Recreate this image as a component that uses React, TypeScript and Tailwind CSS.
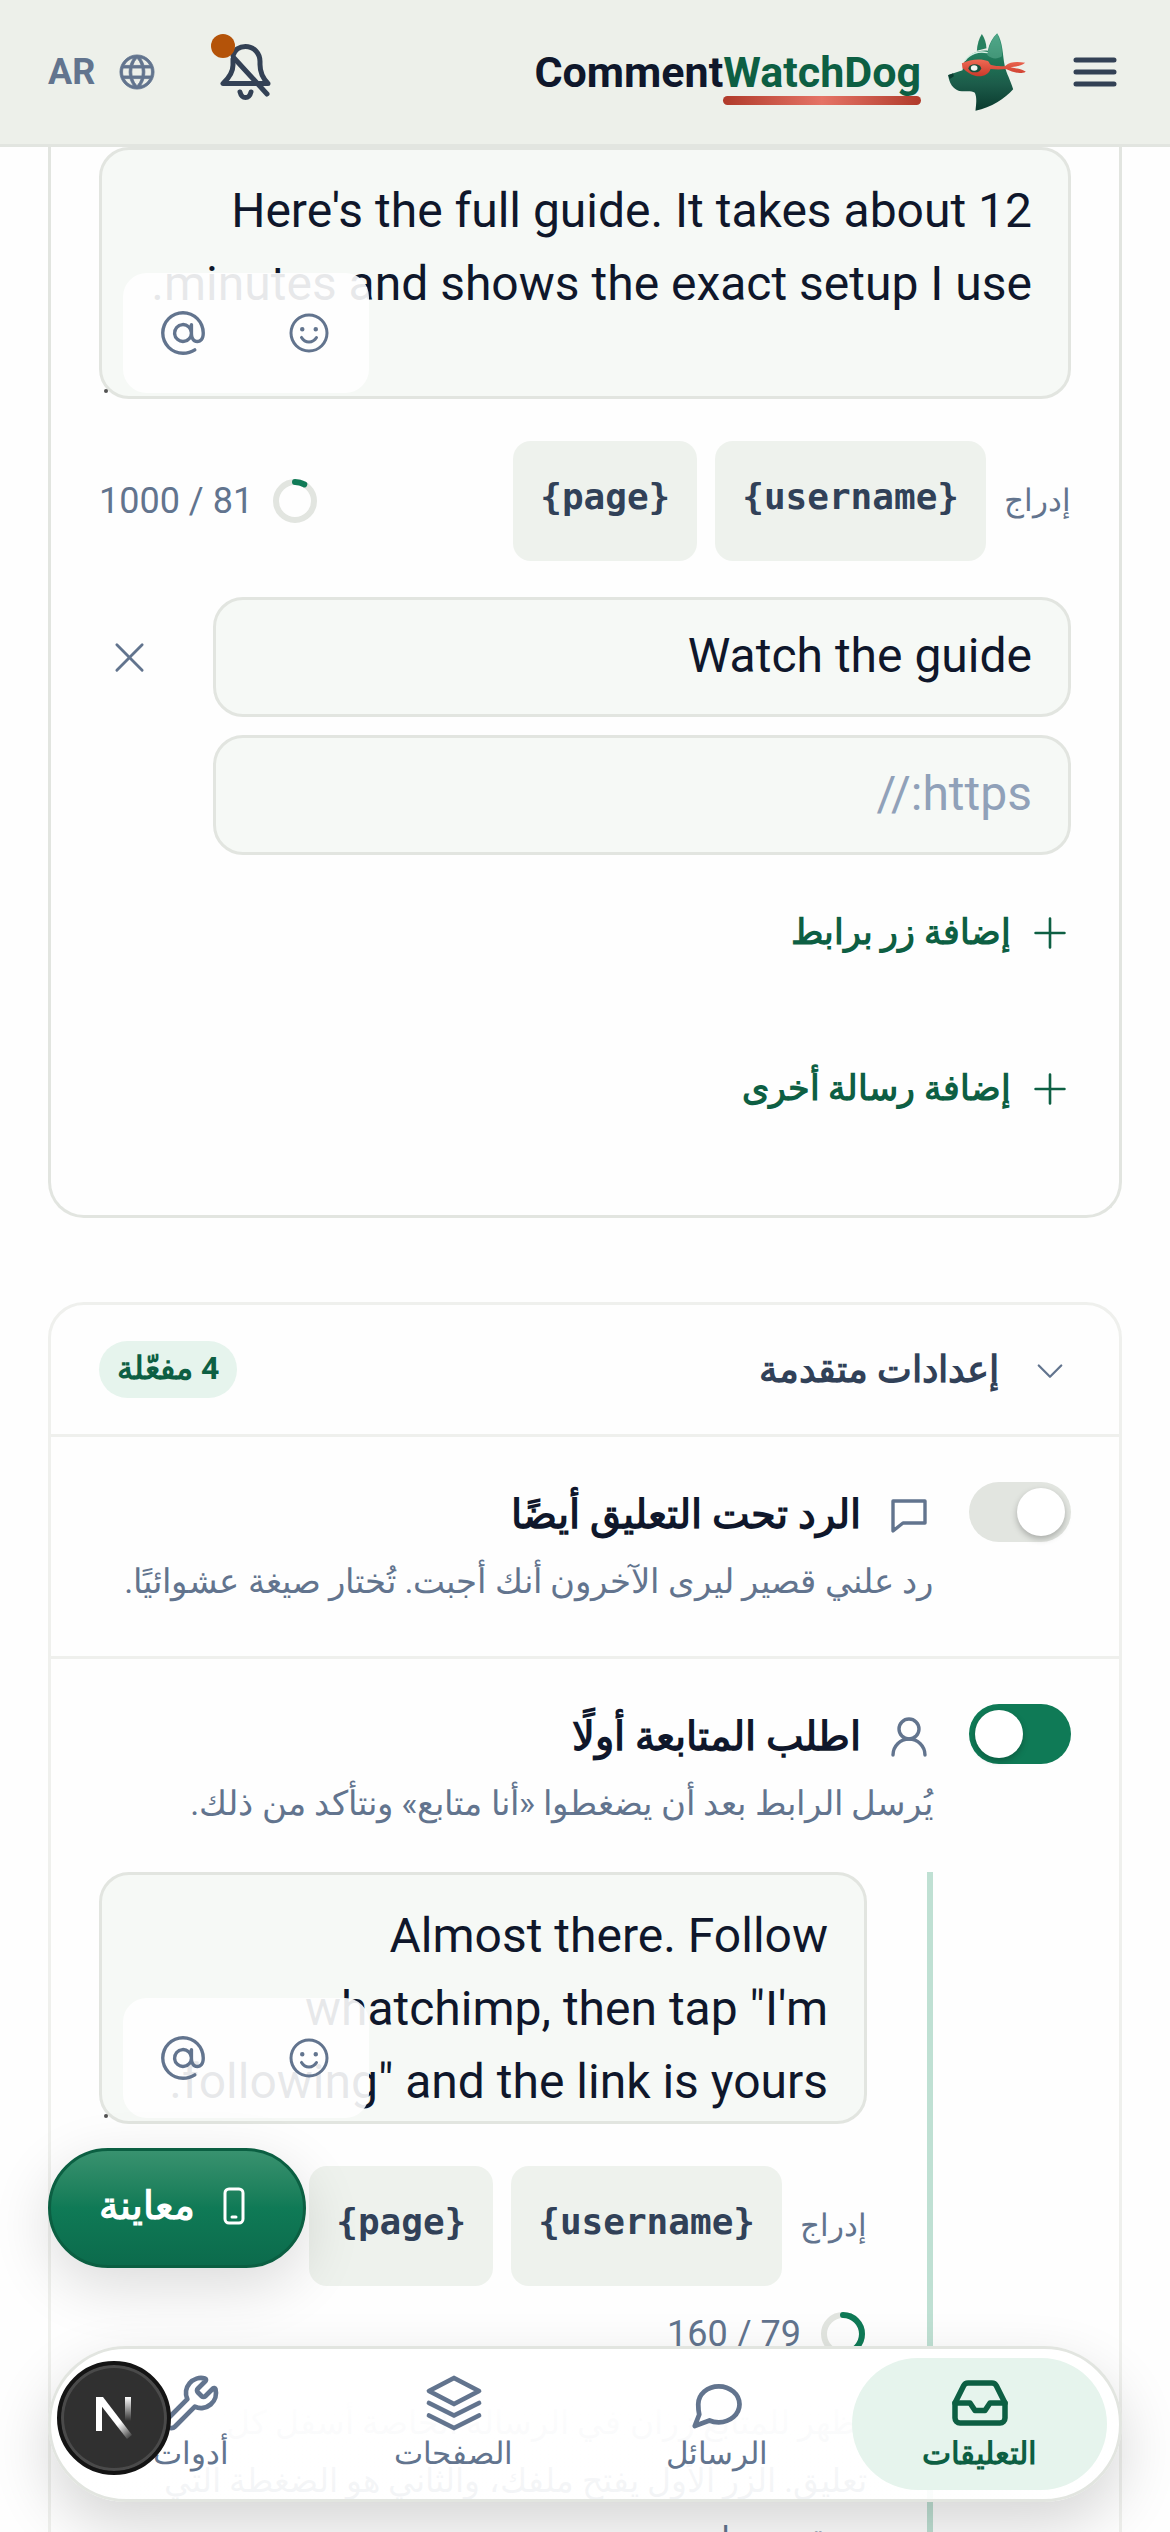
import { useState } from "react";
import type { ReactNode } from "react";
import { Inbox, UserRound, Wrench } from "lucide-react";
import { PiAt, PiCaretDown, PiGlobe, PiPlus, PiSmiley, PiX } from "react-icons/pi";

function DogLogo() {
  return (
    <svg viewBox="75 38 233 234" className="size-[78px] shrink-0" aria-hidden="true">
      <defs>
        <linearGradient id="fur" x1="0" y1="0" x2="0" y2="1">
          <stop offset="0" stopColor="#3a9a7a" />
          <stop offset="0.35" stopColor="#1f7657" />
          <stop offset="0.65" stopColor="#1c5c4a" />
          <stop offset="1" stopColor="#0a3a2e" />
        </linearGradient>
        <linearGradient id="mask" x1="0" y1="0" x2="0" y2="1">
          <stop offset="0" stopColor="#ef6a54" />
          <stop offset="1" stopColor="#c9392a" />
        </linearGradient>
      </defs>
      <path d="M176 41C168 54 162 72 161 91L190 84C189 68 184 52 176 41Z" fill="#27815f" />
      <path
        d="M222 39C208 52 198 70 194 91C165 88 136 100 122 128L118 150L75 164C78 190 90 206 108 212C126 215 144 210 155 217C162 232 159 252 157 271C205 262 245 235 270 207C262 180 250 160 245 138C238 105 240 66 222 39Z"
        fill="url(#fur)"
      />
      <path d="M222 41C234 70 238 90 236 108C222 118 205 116 192 104C196 80 206 56 222 41Z" fill="#6cbb9d" opacity="0.45" />
      <path d="M126 120C140 100 166 91 192 97" fill="none" stroke="#d5efe3" strokeWidth="4" strokeLinecap="round" />
      <path d="M75 165L90 159L92 168L80 176Z" fill="#0c3d31" />
      <path
        d="M116 129C140 116 176 114 194 122C200 126 198 132 204 134C220 138 234 138 246 137C262 122 284 124 306 127C292 138 274 138 262 141C280 144 296 146 308 154C288 164 268 154 248 146C234 148 218 148 202 146C198 162 178 171 158 167C138 163 130 152 118 144Z"
        fill="url(#mask)"
      />
      <ellipse cx="155" cy="144" rx="19" ry="12" fill="#14503d" />
      <ellipse cx="153" cy="143" rx="10" ry="8" fill="#f2f6f2" />
    </svg>
  );
}

function BellOff() {
  return (
    <svg viewBox="0 0 60 60" className="size-[60px]" fill="none" stroke="#334155" strokeWidth="5" strokeLinecap="round" strokeLinejoin="round" aria-hidden="true">
      <path d="M17 17v6c0 8-4 13-10 18.5h45c-5-5-8-10-8-19v-3c0-8-6-15-14.5-15-6 0-10.5 3-12.5 9" />
      <path d="M18 16l33 36" />
      <path d="M24 50c1 4 3 5.500 5.500 5.500s4.500-1.500 5.500-5.500" />
    </svg>
  );
}

function Ring({ value }: { value: number }) {
  const length = 2 * Math.PI * 19;
  return (
    <svg viewBox="0 0 48 48" className="size-12 shrink-0" fill="none" strokeWidth="6" aria-hidden="true">
      <circle cx="24" cy="24" r="19" stroke="#e2e5e0" />
      <circle cx="24" cy="24" r="19" stroke="#0f7a56" strokeDasharray={`${length * value} ${length}`} strokeLinecap="round" transform="rotate(-90 24 24)" />
    </svg>
  );
}

function Counter({ used, max }: { used: number; max: number }) {
  return (
    <div className="flex items-center gap-[18px] text-[36px] leading-[48px] text-slate-500">
      <Ring value={used / max} />
      <span>
        {used} / {max}
      </span>
    </div>
  );
}

function Tokens() {
  return (
    <div className="flex items-center gap-[18px]">
      <span className="text-[31px] leading-[48px] text-slate-500">إدراج</span>
      {["{username}", "{page}"].map((token) => (
        <button key={token} type="button" dir="ltr" className="h-[120px] rounded-[18px] bg-[#eef2ed] px-[27px] pb-2 font-['DejaVu_Sans_Mono',monospace] text-[36px] font-bold text-slate-700">
          {token}
        </button>
      ))}
    </div>
  );
}

function MessageBox({ label, initial }: { label: string; initial: string }) {
  const [text, setText] = useState(initial);
  return (
    <div className="relative">
      <textarea
        aria-label={label}
        value={text}
        onChange={(e) => setText(e.target.value)}
        className="block h-[252px] w-full resize-none overflow-hidden rounded-[30px] border-[3px] border-[#e2e5e0] bg-[#f6f9f6] px-9 py-[24px] text-[48px] leading-[73px] text-slate-900"
      />
      <span className="absolute bottom-[6px] left-[5px] size-1 rounded-full bg-neutral-600" />
      <div className="absolute bottom-[6px] left-6 flex gap-[6px] rounded-[24px] bg-white/90 text-slate-500">
        <button type="button" aria-label="إضافة رمز تعبيري" className="flex h-[120px] w-[120px] items-center justify-center">
          <PiSmiley className="size-12" />
        </button>
        <button type="button" aria-label="إشارة إلى شخص" className="flex h-[120px] w-[120px] items-center justify-center">
          <PiAt className="size-[54px]" />
        </button>
      </div>
    </div>
  );
}

function AddButton({ children }: { children: ReactNode }) {
  return (
    <button type="button" className="flex h-[120px] items-center gap-[18px] self-start text-[35px] font-bold text-[#0d5f43]">
      <PiPlus className="size-[42px]" />
      {children}
    </button>
  );
}

function SettingHead({ id, icon, title, text, initial }: { id: string; icon: ReactNode; title: string; text: string; initial: boolean }) {
  const [on, setOn] = useState(initial);
  return (
    <div className="flex items-start gap-9">
      <input
        id={id}
        type="checkbox"
        role="switch"
        checked={on}
        onChange={(e) => setOn(e.target.checked)}
        className="h-[60px] w-[102px] shrink-0 appearance-none rounded-full bg-[#e2e5e0] p-[6px] before:block before:size-12 before:rounded-full before:bg-white before:shadow-[0_3px_6px_rgba(0,0,0,0.25)] checked:bg-[#0f7a56] checked:before:-translate-x-[42px]"
      />
      <div className="min-w-0 flex-1">
        <label htmlFor={id} className="flex items-center gap-6 text-[40px] leading-[66px] font-bold text-slate-900">
          {icon}
          {title}
        </label>
        <p className="text-[34px] leading-[66px] text-slate-500">{text}</p>
      </div>
    </div>
  );
}

function ChatIcon() {
  return (
    <svg viewBox="0 0 24 24" className="size-12 text-slate-500" fill="none" stroke="currentColor" strokeWidth="1.700" strokeLinejoin="round" aria-hidden="true">
      <path d="M4 5h16v11H9l-5 4V5z" />
    </svg>
  );
}

function LayersIcon() {
  return (
    <svg viewBox="0 0 24 24" className="size-[60px]" fill="none" stroke="currentColor" strokeWidth="1.900" strokeLinecap="round" strokeLinejoin="round" aria-hidden="true">
      <path d="M12 2 2 7.200l10 5.200 10-5.200z" />
      <path d="m2 12 10 5 10-5" />
      <path d="m2 17 10 5 10-5" />
    </svg>
  );
}

function BubbleIcon() {
  return (
    <svg viewBox="0 0 24 24" className="size-[60px]" fill="none" stroke="currentColor" strokeWidth="1.900" strokeLinecap="round" strokeLinejoin="round" aria-hidden="true">
      <path d="M21 12.500c0 4-3.700 7.200-8.300 7.200-1.300 0-2.600-.2-3.700-.7L3.100 21.200l1.800-4.600c-.3-1.300-.4-2.600-.4-4.100 0-4 3.700-7.200 8.200-7.200s8.300 3.200 8.300 7.200z" />
    </svg>
  );
}

function NextBadge() {
  return (
    <button type="button" aria-label="Next.js" className="absolute top-3 left-[6px] flex size-[114px] items-center justify-center rounded-full border-4 border-[#141414] bg-[#303030] shadow-[inset_0_0_0_3px_#4a4a4a]">
      <svg viewBox="0 0 36 44" className="h-[44px] w-9" fill="none" aria-hidden="true">
        <defs>
          <linearGradient id="stem" x1="0" y1="0" x2="0" y2="1">
            <stop offset="0" stopColor="#fff" />
            <stop offset="1" stopColor="#fff" stopOpacity="0" />
          </linearGradient>
          <linearGradient id="slant" x1="22" y1="28" x2="35" y2="43" gradientUnits="userSpaceOnUse">
            <stop offset="0" stopColor="#fff" />
            <stop offset="1" stopColor="#fff" stopOpacity="0" />
          </linearGradient>
        </defs>
        <path d="M0 1h6v34H0z" fill="#fff" />
        <path d="M29 1h6v24h-6z" fill="url(#stem)" />
        <path d="M0 1h7l29 38-5 4L0 3z" fill="url(#slant)" />
      </svg>
    </button>
  );
}

const tabs = [
  { label: "التعليقات", icon: <Inbox size={60} strokeWidth={2.2} />, active: true },
  { label: "الرسائل", icon: <BubbleIcon />, active: false },
  { label: "الصفحات", icon: <LayersIcon />, active: false },
  { label: "أدوات", icon: <Wrench size={60} strokeWidth={1.9} />, active: false },
];

export default function App() {
  const [title, setTitle] = useState("Watch the guide");
  const [url, setUrl] = useState("");
  const field = "h-[120px] w-full rounded-[30px] border-[3px] border-[#e2e5e0] bg-[#f6f9f6] px-9 pb-1 text-[48px] text-slate-900 placeholder:text-slate-400";

  return (
    <div dir="rtl" lang="ar" className="relative h-screen overflow-hidden bg-[#fefefe] font-['Roboto']">
      <header className="flex h-[147px] items-center border-b-[3px] border-[#e2e5e0] bg-[#edf0ea] px-12">
        <button type="button" aria-label="القائمة">
          <svg viewBox="0 0 54 54" className="size-[54px]" stroke="#334155" strokeWidth="5" strokeLinecap="round" aria-hidden="true">
            <path d="M8 15h38M8 27h38M8 39h38" />
          </svg>
        </button>
        <a href="#home" dir="ltr" className="mr-[42px] flex flex-row-reverse items-center gap-[27px]">
          <DogLogo />
          <span className="flex text-[43px] leading-[54px] font-bold text-slate-900">
            Comment
            <span className="relative text-[#0d5f43]">
              WatchDog
              <span className="absolute inset-x-0 -bottom-[6px] h-[9px] rounded-full bg-linear-to-r from-[#b03a2a] via-[#e57366] to-[#b03a2a]" />
            </span>
          </span>
        </a>
        <button type="button" aria-label="الإشعارات" className="relative mr-auto">
          <BellOff />
          <span className="absolute -top-2 -left-[5px] size-6 rounded-full bg-[#b45309]" />
        </button>
        <button type="button" className="mr-[58px] flex items-center gap-[21px] text-[36px] font-bold text-slate-500">
          <PiGlobe className="size-[42px] stroke-current stroke-[5]" />
          AR
        </button>
      </header>

      <main className="px-12">
        <section className="flex flex-col rounded-b-[36px] border-[3px] border-t-0 border-[#e2e5e0] px-12 pb-[66px]">
          <MessageBox label="نص الرسالة" initial="Here's the full guide. It takes about 12 minutes and shows the exact setup I use." />
          <div className="mt-[42px] flex items-center justify-between">
            <Tokens />
            <Counter used={81} max={1000} />
          </div>
          <div className="mt-9 flex gap-[54px]">
            <div className="flex flex-1 flex-col gap-[18px]">
              <input aria-label="عنوان الزر" value={title} onChange={(e) => setTitle(e.target.value)} className={field} />
              <input aria-label="رابط الزر" value={url} onChange={(e) => setUrl(e.target.value)} placeholder="https://" className={field} />
            </div>
            <button type="button" aria-label="حذف الزر" className="flex h-[120px] w-[60px] items-center justify-center text-[45px] text-slate-500">
              <PiX />
            </button>
          </div>
          <div className="mt-[18px] flex flex-col gap-9">
            <AddButton>إضافة زر برابط</AddButton>
            <AddButton>إضافة رسالة أخرى</AddButton>
          </div>
        </section>

        <section className="mt-[84px] rounded-[36px] border-[3px] border-[#eff0ed]">
          <button type="button" aria-expanded="true" className="flex h-[132px] w-full items-center border-b-[3px] border-[#eff0ed] px-12 text-[37px] text-slate-700">
            <PiCaretDown className="mr-[3px] ml-[33px] size-9 text-slate-500" />
            <span className="font-semibold">إعدادات متقدمة</span>
            <span className="mr-auto flex h-[57px] items-center rounded-full bg-[#e6f4ed] px-[18px] pb-1 text-[32px] font-bold text-[#0d5f43]">4 مفعّلة</span>
          </button>
          <div className="h-[222px] border-b-[3px] border-[#eff0ed] px-12 pt-[45px]">
            <SettingHead id="public-reply" icon={<ChatIcon />} title="الرد تحت التعليق أيضًا" text="رد علني قصير ليرى الآخرون أنك أجبت. تُختار صيغة عشوائيًا." initial={false} />
          </div>
          <div className="px-12 pt-[45px]">
            <SettingHead
              id="ask-follow"
              icon={<UserRound size={48} strokeWidth={1.7} className="text-slate-500" />}
              title="اطلب المتابعة أولًا"
              text="يُرسل الرابط بعد أن يضغطوا «أنا متابع» ونتأكد من ذلك."
              initial={true}
            />
            <div className="mt-9 mr-[138px] border-r-[6px] border-[#bfe0d3] pr-[60px] pb-12">
              <MessageBox label="رسالة طلب المتابعة" initial={'Almost there. Follow\nwhatchimp, then tap "I\'m\nfollowing" and the link is yours.'} />
              <div className="mt-[42px]">
                <Tokens />
              </div>
              <div className="mt-6">
                <Counter used={79} max={160} />
              </div>
              <p className="mt-9 text-[33px] leading-[58px] text-slate-500">
                يظهر للمتابع زران في الرسالة الخاصة أسفل كل
                <br />
                تعليق. الزر الأول يفتح ملفك، والثاني هو الضغطة التي
                <br />
                نتحقق منها.
              </p>
            </div>
          </div>
        </section>
      </main>

      <button
        type="button"
        className="absolute bottom-[264px] left-12 flex h-[120px] items-center gap-[18px] rounded-full border-[3px] border-[#0b5f42] bg-linear-to-b from-[#38926f] via-[#0f7a56] to-[#0c6b4c] px-12 pb-1 text-[39px] font-bold text-white shadow-[0_18px_60px_rgba(0,0,0,0.14)]"
      >
        <svg viewBox="0 0 42 42" className="size-[42px]" fill="none" stroke="currentColor" strokeWidth="3" strokeLinecap="round" aria-hidden="true">
          <rect x="12" y="4" width="18" height="34" rx="4" />
          <path d="M19 32h4" />
        </svg>
        معاينة
      </button>

      <nav className="absolute inset-x-12 bottom-[30px] rounded-full border-[3px] border-[#e2e5e0] bg-linear-to-b from-white from-30% to-white/92 shadow-[0_24px_60px_rgba(0,0,0,0.16)]">
        <div className="grid grid-cols-4 gap-2 px-3 py-[9px]">
          {tabs.map((tab) => (
            <a
              key={tab.label}
              href="#tab"
              aria-current={tab.active ? "page" : undefined}
              className={
                tab.active
                  ? "flex h-[132px] flex-col items-center rounded-full bg-[#e6f4ed] pt-[15px] text-[31px] leading-[42px] font-bold text-[#0d5f43]"
                  : "flex h-[132px] flex-col items-center rounded-full pt-[15px] text-[31px] leading-[42px] font-medium text-slate-500"
              }
            >
              {tab.icon}
              {tab.label}
            </a>
          ))}
        </div>
        <NextBadge />
      </nav>
    </div>
  );
}
